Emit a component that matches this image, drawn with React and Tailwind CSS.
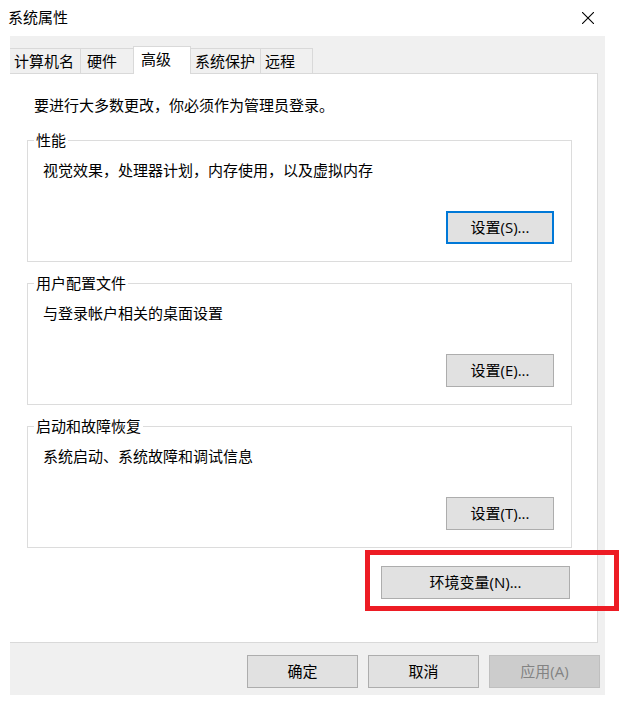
import React from 'react';

const tabs = [
    { label: '计算机名', width: 'w-[71px]' },
    { label: '硬件', width: 'w-[52px]' },
    { label: '高级', width: 'w-[58px]', active: true },
    { label: '系统保护', width: 'w-[70px]' },
    { label: '远程', width: 'w-[52px]' },
];

const groups = [
    { title: '性能', text: '视觉效果，处理器计划，内存使用，以及虚拟内存', button: '设置(S)...', focused: true },
    { title: '用户配置文件', text: '与登录帐户相关的桌面设置', button: '设置(E)...' },
    { title: '启动和故障恢复', text: '系统启动、系统故障和调试信息', button: '设置(T)...' },
];

const Tab = ({ label, width, active }) => (
    <button
        type="button"
        role="tab"
        aria-selected={!!active}
        className={
            active
                ? `${width} relative h-7 border border-b-0 border-[#d9d9d9] bg-white pb-1 pl-[7px] text-left`
                : `${width} mb-px h-[25px] border-t border-r border-[#d9d9d9] bg-[#f0f0f0] pl-1 text-left has-[+[aria-selected=true]]:border-r-0 has-[+[aria-selected=true]]:pl-[6px]`
        }
    >
        {label}
    </button>
);

const Button = ({ className, focused, disabled, children }) => (
    <button
        type="button"
        disabled={disabled}
        className={`${className} h-[33px] pb-[2px] ${
            disabled
                ? 'border border-[#bfbfbf] bg-[#cccccc] text-[#838383]'
                : focused
                  ? 'border-2 border-[#0078d7] bg-[#e1e1e1]'
                  : 'border border-[#adadad] bg-[#e1e1e1]'
        }`}
    >
        {children}
    </button>
);

const Group = ({ title, text, button, focused }) => (
    <fieldset className="border border-[#dcdcdc] pr-[17px] pb-[17px]">
        <legend className="ml-[6px] px-[2px]">{title}</legend>
        <p className="pt-[10px] pl-[15px]">{text}</p>
        <div className="mt-[31px] flex justify-end">
            <Button className="w-[108px]" focused={focused}>{button}</Button>
        </div>
    </fieldset>
);

const App = () => (
    <div className="min-h-screen bg-white pr-[25px] pl-[10px] font-['Open_Sans','Noto_Sans_CJK_SC',sans-serif] text-[15px] leading-5 text-black" lang="zh-CN">
        {/* Title bar */}
        <header className="flex h-9 items-center justify-between pr-[10px]">
            <h1 className="-ml-[2px] pb-[2px]">系统属性</h1>
            <button type="button" aria-label="关闭" className="flex h-7 w-[14px] items-center justify-center">
                <svg width="12" height="12" viewBox="0 0 12 12" fill="none" stroke="black" strokeWidth="1.1">
                    <path d="M0 0L12 12M12 0L0 12" />
                </svg>
            </button>
        </header>

        <div className="bg-[#f0f0f0] pt-[10px]">
            <div role="tablist" className="-mb-px flex items-end">
                {tabs.map((tab) => (
                    <Tab key={tab.label} {...tab} />
                ))}
            </div>

            {/* Advanced tab */}
            <main className="mr-[7px] border-t border-r border-b border-[#d9d9d9] bg-white pt-[21px] pr-[25px] pb-[43px] pl-[17px]">
                <p className="mb-[15px] pl-[7px]">要进行大多数更改，你必须作为管理员登录。</p>
                <div className="flex flex-col gap-[11px]">
                    {groups.map((group) => (
                        <Group key={group.title} {...group} />
                    ))}
                </div>
                <div className="mt-[18px] flex justify-end pr-[2px]">
                    <div className="relative">
                        <Button className="w-[189px]">环境变量(N)...</Button>
                        {/* Highlight frame around the button */}
                        <div className="pointer-events-none absolute -top-4 -right-[49px] -bottom-3 -left-4 border-[5px] border-[#ed1c24]" />
                    </div>
                </div>
            </main>

            <footer className="flex justify-end gap-[10px] pt-3 pr-[5px] pb-[7px]">
                <Button className="w-[111px]">确定</Button>
                <Button className="w-[111px]">取消</Button>
                <Button className="w-[111px]" disabled>应用(A)</Button>
            </footer>
        </div>
    </div>
);

export default App;
